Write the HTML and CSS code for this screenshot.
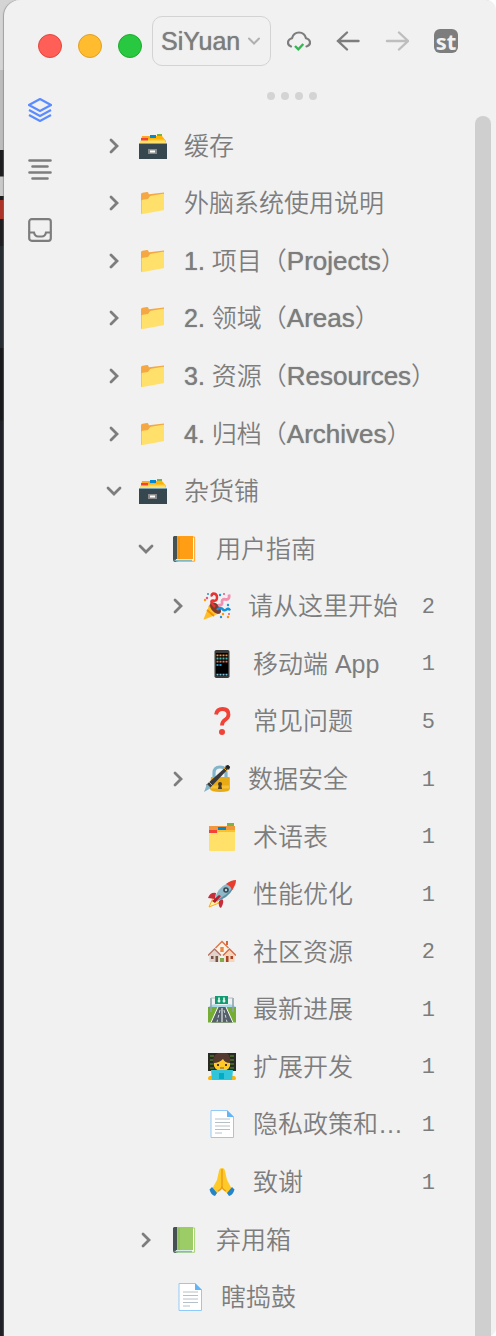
FILE: index.html
```html
<!DOCTYPE html>
<html lang="zh-CN">
<head>
<meta charset="utf-8">
<meta name="viewport" content="width=device-width, initial-scale=1">
<title>SiYuan</title>
<link rel="stylesheet" href="styles.css">
</head>
<body>
<svg class="sprite" aria-hidden="true">
  <symbol id="chevron" viewBox="0 0 24 24"><path d="M9 6l6 6-6 6" fill="none" stroke="currentColor" stroke-width="2.800" stroke-linecap="round" stroke-linejoin="miter"/></symbol>
  <symbol id="cabinet" viewBox="0 0 28 28">
    <path d="M18 2h5v5h-5z" fill="#7cb342"/><path d="M3 4h20l4 5v3H1z" fill="#ffb300"/><path d="M3 4h9v2H3z" fill="#ffa726"/>
    <path d="M11 3h6v3h-6z" fill="#0288d1"/><path d="M2 6h7v3H2z" fill="#f44336"/><path d="M9 7h17v3H9z" fill="#fbc02d"/><path d="M2 8.500h24l1.500 3.500h-27z" fill="#ffe16a"/>
    <path d="M0 11h28v16H0z" fill="#37474f"/><path d="M0 11h28v1H0z" fill="#7da3b3"/><path d="M9 17h9v5H9z" fill="#8a8a8a"/><path d="M11 18.500h5v2h-5z" fill="#fff"/>
  </symbol>
  <symbol id="folder" viewBox="0 0 28 28">
    <path d="M2 5.500q0-1.500 1.500-1.700l4.500-.8q1-.1 1.300.8l.6 1.500L25 3.500v6L2 25z" fill="#f4a743"/>
    <path d="M2.500 25.300V12q0-1 1-1.200l5.500-.7 2-2.800q.4-.5 1-.6l12-1.900q1-.1 1 .8v14.600q0 .8-.8 1z" fill="#ffe06a"/>
  </symbol>
  <symbol id="book" viewBox="0 0 28 28">
    <path d="M3 1h21.500v25.500H3z" fill="#fff"/><path d="M3 1h3.500v26H4Q2 27 2 24V2z" fill="#455052"/><path d="M6 1h16.500v23H6z" fill="currentColor"/>
    <path d="M5 24.500h17.500V3" fill="none" stroke="#fff" stroke-width="1"/><path d="M23.700 1.500v24.700H5" fill="none" stroke="currentColor" stroke-width="1"/><path d="M3.500 25.500H21" stroke="#81b9c5" stroke-width="1.600"/><path d="M8 2v22" stroke="#000" stroke-opacity=".12"/>
  </symbol>
  <symbol id="party" viewBox="0 0 28 28">
    <path d="M7 11.500L.7 26.700q-.3 1 .8.700L17 21z" fill="#ffbe27"/><path d="M4 18l7 6M6 13.500l9.500 8" stroke="#f29100" stroke-width="1.800"/>
    <ellipse cx="12.500" cy="16" rx="4" ry="7" transform="rotate(-42 12.500 16)" fill="#7c3b2c"/>
    <path d="M12 15Q6 9 10 8.500q4 1 4-3 0-4-4-4-2 1-1 3" fill="none" stroke="#e93232" stroke-width="2.500"/>
    <path d="M15 13q5 1 4-3.500 0-3 4-2 4 0 3-5" fill="none" stroke="#f48fb1" stroke-width="2.800"/>
    <path d="M14 18q2-3 5-1.500 2 3 4.500 1 2-2 3.500 1" fill="none" stroke="#1493dc" stroke-width="2.500"/>
    <g fill="#2196d3"><circle cx="5" cy="2" r="1"/><circle cx="17" cy="3" r="1.200"/><circle cx="25" cy="13" r="1.200"/><circle cx="18" cy="25" r="1.200"/></g>
    <g fill="#ff9800"><circle cx="2" cy="8" r="1.200"/><circle cx="20" cy="22" r="1.200"/><circle cx="25" cy="25" r="1.200"/></g><g fill="#e95380"><circle cx="4" cy="6" r="1.200"/><circle cx="21" cy="2" r="1"/><circle cx="26" cy="22" r="1"/></g>
  </symbol>
  <symbol id="phone" viewBox="0 0 28 28">
    <rect x="6.500" y="0" width="15" height="28" rx="1.800" fill="#3b3b3b"/><path d="M8 3h12v23H8z" fill="#000"/>
    <path d="M8.500 5.300h11" stroke="#fb8c3b" stroke-width="1.800" stroke-dasharray="2 1"/><path d="M8.500 8.500h11" stroke="#4db6ac" stroke-width="1.800" stroke-dasharray="2 1"/><path d="M8.500 11.700h11" stroke="#e57355" stroke-width="1.800" stroke-dasharray="2 1"/><path d="M8.500 15h5" stroke="#2196d3" stroke-width="1.800" stroke-dasharray="2 1"/><path d="M8.500 24.700h11" stroke="#7ec8e3" stroke-width="1.800" stroke-dasharray="2 1"/>
  </symbol>
  <symbol id="question" viewBox="0 0 28 28"><path d="M8 7.500q1-5.500 6.500-5.500 6 0 6 5.500 0 3-3.200 5.200-3.300 2.100-3.300 5.800" fill="none" stroke="#ef4338" stroke-width="3.800"/><circle cx="14" cy="25" r="3" fill="#ef4338"/></symbol>
  <symbol id="lock-pen" viewBox="0 0 28 28">
    <path d="M11 13V8q0-6 6-6t6 6v5" fill="none" stroke="#83b5ca" stroke-width="3.200"/><path d="M8 12h18q.8 0 .8 1v11q0 3-9.500 3T7 24z" fill="#e9ab13"/><path d="M8 22h18" stroke="#f3c13a" stroke-width="3"/>
    <path d="M25 0l2 2L7 23l-4-3z" fill="#3a3a3c"/><path d="M22 1l3-1 2 2-1 3z" fill="#222"/><path d="M21 3l3 3M6 17l4 4" stroke="#d99d22" stroke-width="1"/><path d="M4 19l4 4-7 4z" fill="#83b5ca"/>
    <circle cx="17" cy="19" r="2" fill="#493b26"/><path d="M16 19h2l1 5h-4z" fill="#493b26"/>
  </symbol>
  <symbol id="dividers" viewBox="0 0 28 28">
    <path d="M19 0h7v5h-7z" fill="#7cb342"/><path d="M1 3h26v10H1z" fill="#ef9840"/><path d="M10 4h8v4h-8z" fill="#0288d1"/><path d="M8 7h19v5H8z" fill="#fbc02d"/><path d="M1 7h8v4H1z" fill="#f44336"/><path d="M1 10h8l1-1h17v18q0 1-1 1H2q-1 0-1-1z" fill="#ffe16a"/>
  </symbol>
  <symbol id="rocket" viewBox="0 0 28 28">
    <path d="M5 18l-4 9 10-4z" fill="#fff59d" stroke="#f9a825"/><path d="M8 13q-6-1-8 5l7 1zM14 19q3 2-1 9-3-1-2-7z" fill="#c62e3b"/>
    <path d="M7 19Q9 8 20 3l5 5q-5 9-16 13z" fill="#8fb8c9"/><path d="M11 19Q20 14 24 8l1 1q-5 9-16 12z" fill="#5b8fa5"/><path d="M18 4q5-4 10-4 0 5-4 10-1-4-6-6z" fill="#e63d2e"/><circle cx="18" cy="10" r="2.800" fill="#37474f"/><circle cx="18" cy="10" r="1.200" fill="#b9d8e4"/><path d="M4 21l7-6 2 1-6 7z" fill="#b71c2c"/>
  </symbol>
  <symbol id="houses" viewBox="0 0 28 28">
    <path d="M9 9l5-5 5 5v7H9z" fill="#fff3e7"/><path d="M7.500 10L14 3.500l6.500 6.500" fill="none" stroke="#e0764a" stroke-width="1.500"/><path d="M18 3h2v4h-2z" fill="#d9653a"/><path d="M12.300 9h3.400v5h-3.400z" fill="#e88947"/>
    <path d="M1.500 17l5-5 5 5v7h-10z" fill="#e2d2cc"/><path d="M0 17.500l6.500-6.500 6.500 6.500" fill="none" stroke="#b77363" stroke-width="1.500"/><path d="M3 18h2.500v3H3zM7.500 18H10v6H7.500z" fill="#795548"/>
    <path d="M16.500 17l5-5 5 5v7h-10z" fill="#f4d6be"/><path d="M15 17.500l6.500-6.500 6.500 6.500" fill="none" stroke="#dc683e" stroke-width="1.500"/><path d="M18 18h2.500v6H18zM22.500 18H25v3h-2.500z" fill="#a84424"/><path d="M12 20h4v4h-4z" fill="#82a94a"/>
  </symbol>
  <symbol id="motorway" viewBox="0 0 28 28">
    <path d="M0 12q5-4 10-2h8q6-2 10 2v3H0z" fill="#a6d9e8"/><path d="M0 12h28v15.500H0z" fill="#76ad34"/><path d="M10 12h8l7 15.500H3z" fill="#56606a"/><path d="M10 12L3 27.500M18 12l7 15.500M14 13v14" stroke="#fff" stroke-width="1"/><path d="M12 15l-3 12M16 15l3 12" stroke="#cfd8dc" stroke-dasharray="3 2"/>
    <path d="M3 3v14M25 3v14" fill="none" stroke="#90a4ae" stroke-width="1.600"/><path d="M3 3h22" stroke="#b0bec5"/><path d="M7 1h13v8H7z" fill="#129a70"/><path d="M11 2.500v5M16 2.500v5" stroke="#fff" stroke-width="1.500"/><path d="M9.500 6h3M14.500 6h3" stroke="#fff"/>
  </symbol>
  <symbol id="coder" viewBox="0 0 28 28">
    <path d="M0 0h28v18H0z" fill="#272b24"/><path d="M2 3h24M2 7h24M2 11h24M2 15h24" stroke="#659c2b" stroke-dasharray="4 1"/>
    <path d="M6 12q-2-5 0-8 3-5 8-5 7 0 8 6 1 4-1 7z" fill="#543930"/><path d="M6 10q5 0 9-4 2 4 7 4v3q-2 5-8 5t-8-5z" fill="#ffca28"/><path d="M10 11v2M18 11v2" stroke="#543930" stroke-width="2"/><path d="M12 15h4" stroke="#795548"/>
    <path d="M0 26q0-4 5-3v4H1zM28 26q0-4-5-3v4h4z" fill="#ffb300"/><path d="M3 17h22l-1 10H4z" fill="#32c5da"/><path d="M11 20h5v6h-5z" fill="#00acc1"/>
  </symbol>
  <symbol id="page" viewBox="0 0 28 28"><path d="M3 .5h16L25.500 7v20.500H3z" fill="#fff" stroke="#90caf9"/><path d="M19 0l7 7h-7z" fill="#64b5f6"/><path d="M7 9h15M7 12.500h15M7 16h15M7 19.500h15M7 23h7" stroke="#b5c0c6"/></symbol>
  <symbol id="pray" viewBox="0 0 28 28">
    <path d="M14 0q-2.500 0-3 3L9 12l-5 9 4 5 6-5 6 5 4-5-5-9-2-9q-.5-3-3-3z" fill="#ffca28"/><path d="M14 1v17q0 3-4 5M14 18q0 3 4 5" fill="none" stroke="#e99916" stroke-width="1.300"/><path d="M4 19l5 6-2 3q-4-1-5.500-6.500zM24 19l-5 6 2 3q4-1 5.500-6.500z" fill="#2484c7"/>
  </symbol>
</svg>

<div class="window">
  <header class="toolbar">
    <div class="lights">
      <button class="light light-close" aria-label="关闭"></button>
      <button class="light light-min" aria-label="最小化"></button>
      <button class="light light-max" aria-label="缩放"></button>
    </div>
    <div class="workspace">
      <select class="workspace-select" aria-label="工作空间"><option>SiYuan</option></select>
      <svg class="workspace-arrow" viewBox="0 0 16 16" aria-hidden="true"><path d="M3 5.500l5 5 5-5" fill="none" stroke="currentColor" stroke-width="2" stroke-linecap="round"/></svg>
    </div>
    <nav class="actions">
      <button class="tool" aria-label="同步"><svg viewBox="0 0 24 24"><path d="M4 17.500Q1 16.500 1 13.800q0-3.500 4-4.600Q6.500 3.500 12 3.500t7 5.700q4 1.100 4 4.600 0 2.700-3.500 3.700" fill="none" stroke="currentColor" stroke-width="2.200" stroke-linecap="round"/><path d="M8 17l3.300 3.300 5-5.300" fill="none" stroke="#35b553" stroke-width="2.400"/></svg></button>
      <button class="tool" aria-label="后退"><svg viewBox="0 0 24 24"><path d="M22.500 12H2M11 3.500L2 12l9 8.500" fill="none" stroke="currentColor" stroke-width="2.400" stroke-linecap="round"/></svg></button>
      <button class="tool tool-off" aria-label="前进"><svg viewBox="0 0 24 24"><path d="M2 12h21M14 3.500l9 8.500-9 8.500" fill="none" stroke="currentColor" stroke-width="2.400" stroke-linecap="round"/></svg></button>
      <button class="tool badge">st</button>
    </nav>
  </header>

  <div class="body">
    <nav class="dock">
      <button class="tool tool-active" aria-label="文档树"><svg viewBox="0 0 24 24"><path d="M12 1l11 6-11 6L1 7zM1 12l11 6 11-6M1 17l11 6 11-6" fill="none" stroke="currentColor" stroke-width="2.200"/></svg></button>
      <button class="tool" aria-label="大纲"><svg viewBox="0 0 24 24"><path d="M1.500 2.500h21M4.500 8.500h15M1.500 14.500h21M4.500 20.500h15" stroke="currentColor" stroke-width="2.600" stroke-linecap="round"/></svg></button>
      <button class="tool" aria-label="收集箱"><svg viewBox="0 0 24 24"><rect x="1.200" y="1.200" width="21.600" height="21.600" rx="2.500" fill="none" stroke="currentColor" stroke-width="2.200"/><path d="M1 14.500h5q1 4 4 4h4q3 0 4-4h5" fill="none" stroke="currentColor" stroke-width="2.200"/></svg></button>
    </nav>
    <main class="panel">
      <div class="grip"><i></i><i></i><i></i><i></i></div>
      <div class="scroller">
        <ul class="tree">
          <li class="row"><button class="toggle" aria-label="展开"><svg><use href="#chevron"/></svg></button><svg class="icon"><use href="#cabinet"/></svg><span class="name">缓存</span></li>
          <li class="row"><button class="toggle" aria-label="展开"><svg><use href="#chevron"/></svg></button><svg class="icon"><use href="#folder"/></svg><span class="name">外脑系统使用说明</span></li>
          <li class="row"><button class="toggle" aria-label="展开"><svg><use href="#chevron"/></svg></button><svg class="icon"><use href="#folder"/></svg><span class="name"><b>1.</b> 项目（<b class="latin">Projects</b>）</span></li>
          <li class="row"><button class="toggle" aria-label="展开"><svg><use href="#chevron"/></svg></button><svg class="icon"><use href="#folder"/></svg><span class="name"><b>2.</b> 领域（<b class="latin">Areas</b>）</span></li>
          <li class="row"><button class="toggle" aria-label="展开"><svg><use href="#chevron"/></svg></button><svg class="icon"><use href="#folder"/></svg><span class="name"><b>3.</b> 资源（<b class="latin">Resources</b>）</span></li>
          <li class="row"><button class="toggle" aria-label="展开"><svg><use href="#chevron"/></svg></button><svg class="icon"><use href="#folder"/></svg><span class="name"><b>4.</b> 归档（<b class="latin">Archives</b>）</span></li>
          <li class="row"><button class="toggle open" aria-label="折叠"><svg><use href="#chevron"/></svg></button><svg class="icon"><use href="#cabinet"/></svg><span class="name">杂货铺</span></li>
          <li class="row level-1"><button class="toggle open" aria-label="折叠"><svg><use href="#chevron"/></svg></button><svg class="icon orange"><use href="#book"/></svg><span class="name">用户指南</span></li>
          <li class="row level-2"><button class="toggle" aria-label="展开"><svg><use href="#chevron"/></svg></button><svg class="icon"><use href="#party"/></svg><span class="name">请从这里开始</span><span class="count">2</span></li>
          <li class="row level-2 leaf"><svg class="icon"><use href="#phone"/></svg><span class="name">移动端 App</span><span class="count">1</span></li>
          <li class="row level-2 leaf"><svg class="icon"><use href="#question"/></svg><span class="name">常见问题</span><span class="count">5</span></li>
          <li class="row level-2"><button class="toggle" aria-label="展开"><svg><use href="#chevron"/></svg></button><svg class="icon"><use href="#lock-pen"/></svg><span class="name">数据安全</span><span class="count">1</span></li>
          <li class="row level-2 leaf"><svg class="icon"><use href="#dividers"/></svg><span class="name">术语表</span><span class="count">1</span></li>
          <li class="row level-2 leaf"><svg class="icon"><use href="#rocket"/></svg><span class="name">性能优化</span><span class="count">1</span></li>
          <li class="row level-2 leaf"><svg class="icon"><use href="#houses"/></svg><span class="name">社区资源</span><span class="count">2</span></li>
          <li class="row level-2 leaf"><svg class="icon"><use href="#motorway"/></svg><span class="name">最新进展</span><span class="count">1</span></li>
          <li class="row level-2 leaf"><svg class="icon"><use href="#coder"/></svg><span class="name">扩展开发</span><span class="count">1</span></li>
          <li class="row level-2 leaf"><svg class="icon"><use href="#page"/></svg><span class="name">隐私政策和…</span><span class="count">1</span></li>
          <li class="row level-2 leaf"><svg class="icon"><use href="#pray"/></svg><span class="name">致谢</span><span class="count">1</span></li>
          <li class="row level-1"><button class="toggle" aria-label="展开"><svg><use href="#chevron"/></svg></button><svg class="icon green"><use href="#book"/></svg><span class="name">弃用箱</span></li>
          <li class="row level-1 leaf"><svg class="icon"><use href="#page"/></svg><span class="name">瞎捣鼓</span></li>
        </ul>
        <div class="scrollbar"></div>
      </div>
    </main>
  </div>
</div>
</body>
</html>
```
FILE: styles.css
```css
* { box-sizing: border-box; }

body {
  margin: 0;
  padding-left: 4px;
  color: #7d7d7d;
  font-family: "Liberation Sans", "Noto Sans CJK SC", sans-serif;
  font-size: 25px;
  font-weight: 350;
  line-height: 36px;
  background:
    linear-gradient(#d4d4d4 0 70px, #bcbcbc 70px 150px, #1d1d20 150px 176px, #c9c9c9 177px 196px,
      #1d1d20 196px 200px, #ad3228 200px 219px, #1e1e20 219px 246px, #262c30 246px 348px,
      #19191b 348px 420px, #202126 421px) 0 0 / 16px 100% no-repeat, #fff;
}

button {
  padding: 0;
  border: 0;
  color: inherit;
  background: none;
}

.sprite {
  position: absolute;
  width: 0;
  height: 0;
}

.window {
  display: flex;
  flex-direction: column;
  min-height: 100vh;
  border-radius: 16px 10px 8px 0;
  background: #f1f1f1;
  box-shadow: -1px 0 1px #77777788;
}

.toolbar {
  display: flex;
  align-items: center;
  padding: 16px 16px 0 34px;
}

.lights {
  display: flex;
  gap: 16px;
  margin: 10px 10px 0 0;
}

.light {
  width: 24px;
  height: 24px;
  border: 1px solid;
  border-radius: 50%;
}

.light-close { background: #ff5f57; border-color: #e2463f; }
.light-min { background: #febc2e; border-color: #e1a023; }
.light-max { background: #28c840; border-color: #1dac2b; }

.workspace { position: relative; }

.workspace-select {
  display: block;
  width: 119px;
  height: 50px;
  padding: 0 28px 0 8px;
  appearance: none;
  border: 1px solid #d3d3d3;
  border-radius: 10px;
  color: inherit;
  background: transparent;
  font: inherit;
  text-shadow: 0 0 1px #7d7d7d;
}

.workspace-arrow {
  position: absolute;
  top: 17px;
  right: 9px;
  width: 16px;
  height: 16px;
  color: #b0b0b0;
  pointer-events: none;
}

.actions {
  display: flex;
  gap: 25px;
  margin-left: 16px;
}

.tool {
  width: 24px;
  height: 24px;
}

.tool svg {
  display: block;
  width: 100%;
  height: 100%;
}

.tool-off { color: #bebebe; }
.tool-active { color: #5b8cff; }

.badge {
  border-radius: 6px;
  color: #f1f1f1;
  background: #7d7d7d;
  font: bold 22px/20px "Noto Sans", sans-serif;
}

.body {
  display: flex;
  flex: 1;
}

.dock {
  display: flex;
  flex-direction: column;
  align-items: center;
  gap: 36px;
  width: 84px;
  padding: 32px 12px 0 0;
}

.panel {
  display: flex;
  flex: 1;
  flex-direction: column;
  min-width: 0;
}

.grip {
  display: flex;
  justify-content: center;
  gap: 6px;
  margin: 26px 0 16px;
}

.grip i {
  width: 8px;
  height: 8px;
  border-radius: 50%;
  background: #d4d4d4;
}

.scroller {
  display: flex;
  flex: 1;
  padding-right: 5px;
}

.tree {
  display: grid;
  flex: 1;
  grid-auto-rows: 1fr;
  min-width: 0;
  margin: 0;
  padding: 1px 40px 10px 14px;
  list-style: none;
}

.scrollbar {
  width: 16px;
  border-radius: 8px 8px 0 0;
  background: #cfcfcf;
}

.row {
  display: flex;
  align-items: center;
  min-width: 0;
}

.level-1 { padding-left: 32px; }
.level-2 { padding-left: 64px; }

.toggle {
  flex: none;
  width: 24px;
  height: 24px;
}

.toggle svg {
  display: block;
  width: 24px;
  height: 24px;
}

.open svg { transform: rotate(90deg); }

.icon {
  flex: none;
  width: 28px;
  height: 28px;
  margin: 0 17px 0 13px;
}

.leaf .icon { margin-left: 42px; }

.orange { color: #ff9d14; }
.green { color: #9ccc65; }

.name {
  flex: 1;
  white-space: nowrap;
}

.name b {
  font-weight: 400;
  text-shadow: 0 0 1px #7d7d7d;
}

.name .latin { font-size: 26px; }

.count {
  padding-top: 3px;
  font-family: "Liberation Mono", monospace;
  font-size: 22px;
}
```
